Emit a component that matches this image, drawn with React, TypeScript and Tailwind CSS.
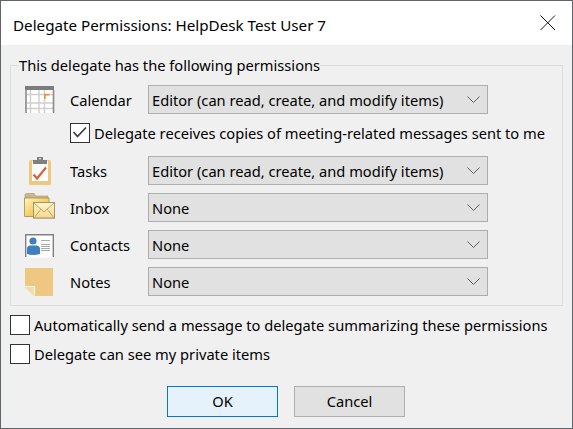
import React from "react";

const CalendarIcon = () => (
  <svg width="30" height="28" viewBox="0 0 30 28" className="block mt-[1px]">
    <rect x="0" y="0" width="29" height="27" fill="#fff" />
    <g stroke="#cfcfcf" strokeWidth="1.4" fill="none">
      <path d="M5.5 4V27M14 4V27M19.5 4V27" />
      <path d="M0 8.5H29M0 17H29M0 22.5H29" />
    </g>
    <path d="M1 4V27M28.5 4V27" stroke="#8a8a8a" strokeWidth="1.6" fill="none" />
    <rect x="0" y="0" width="29" height="4" fill="#7c7c7c" />
    <path d="M19.8 13V8.8H24.5" stroke="#ed8f2f" strokeWidth="1.6" fill="none" />
  </svg>
);

const TasksIcon = () => (
  <svg width="30" height="29" viewBox="0 0 30 29" className="block mt-[2px]">
    <rect x="4" y="3" width="22" height="25" rx="1.5" fill="#f0c77f" />
    <rect x="7" y="4" width="16" height="20" fill="#fff" />
    <rect x="8" y="3" width="14" height="4" fill="#7f7f7f" />
    <rect x="12" y="0" width="6" height="3" fill="#7f7f7f" />
    <rect x="14" y="1" width="2" height="1.5" fill="#d8d8d8" />
    <path d="M8.5 17.5L12 21.5L21 10.5" fill="none" stroke="#d95f3c" strokeWidth="2.2" />
  </svg>
);

const InboxIcon = () => (
  <svg width="32" height="29" viewBox="0 0 32 29" className="block -ml-[1px]">
    <defs>
      <linearGradient id="fold" x1="0" y1="0" x2="1" y2="1">
        <stop offset="0" stopColor="#fff6b8" />
        <stop offset="1" stopColor="#efaa22" />
      </linearGradient>
      <linearGradient id="env" x1="0" y1="0" x2="0" y2="1">
        <stop offset="0" stopColor="#fff6d2" />
        <stop offset="1" stopColor="#f6d88c" />
      </linearGradient>
    </defs>
    <path d="M1 8V2Q1 0.5 2.5 0.5H10L12 3H24V8Z" fill="#c9b98a" stroke="#a8986c" strokeWidth="0.6" />
    <path d="M0.5 23.5V5H25V23.5Z" fill="url(#fold)" stroke="#a08a58" strokeWidth="0.8" />
    <rect x="10" y="24" width="21" height="2" fill="#c8c8c8" />
    <rect x="9.5" y="9.5" width="21" height="15.5" fill="url(#env)" stroke="#a8946a" />
    <path d="M10 10L20 19L30 10M10 25L17 16M30 25L23 16" fill="none" stroke="#c9a45e" strokeWidth="1" />
  </svg>
);

const ContactsIcon = () => (
  <svg width="30" height="24" viewBox="0 0 30 24" className="block mt-[3px]">
    <rect x="0.5" y="0.5" width="28" height="23" fill="#fff" />
    <path d="M0.7 23V0.7H28.3V23" fill="none" stroke="#808080" strokeWidth="1.4" />
    <circle cx="8" cy="7" r="3.6" fill="#3f7fbf" />
    <path d="M2 20V15Q2 11.5 5 11.5H11Q15 11.5 15 15V20Q8 22 2 20Z" fill="#3f7fbf" />
    <path d="M16 6.5H25M16 10.5H25M16 12.5H25M16 14.5H25M16 16.5H25" stroke="#a9a9a9" strokeWidth="1" />
  </svg>
);

const NotesIcon = () => (
  <svg width="29" height="29" viewBox="0 0 29 29" className="block mt-[2px]">
    <path d="M0 0H28V28H9L0 19Z" fill="#eec882" />
    <path d="M0 19H9V28Z" fill="#f3dcae" />
    <path d="M0 18.5H9.5V28" fill="none" stroke="#fbf3e2" strokeWidth="1.2" />
  </svg>
);

const Chevron = () => (
  <svg width="13" height="7" viewBox="0 0 13 7" className="block">
    <path d="M0.5 0.5L6.5 6.5L12.5 0.5" fill="none" stroke="#606060" strokeWidth="1" />
  </svg>
);

const Select = ({ value }: { value: string }) => (
  <div className="w-[340px] h-[29px] flex items-center justify-between bg-[#e1e1e1] border border-[#adadad] pl-[3px] pr-[7px] box-border">
    <span>{value}</span>
    <Chevron />
  </div>
);

const Row = ({ icon, label, value, className }: { icon: React.ReactNode; label: string; value: string; className?: string }) => (
  <div className={"flex items-center h-[29px] " + (className ?? "")}>
    <div className="w-[45px] h-[29px] flex items-center">{icon}</div>
    <div className="w-[78px]">{label}</div>
    <Select value={value} />
  </div>
);

const Check = ({ checked }: { checked?: boolean }) => (
  <div className="w-[20px] h-[20px] shrink-0 bg-white border border-[#333333] box-border">
    {checked && (
      <svg width="18" height="18" viewBox="0 0 18 18" className="block">
        <path d="M2.5 8L6.5 12.5L15 3.5" fill="none" stroke="#404040" strokeWidth="1.8" />
      </svg>
    )}
  </div>
);

const editor = "Editor (can read, create, and modify items)";

export default function App() {
  return (
    <div className="w-[573px] h-[429px] bg-[#f0f0f0] border border-[#5f6468] box-border flex flex-col text-[14.66px] leading-[20px] text-black font-['Noto_Sans',sans-serif] overflow-hidden">
      <div className="h-[44px] shrink-0 bg-white flex items-center justify-between pl-[12px] pr-[16px]">
        <span className="text-[15.2px] pt-[3px]">Delegate Permissions: HelpDesk Test User 7</span>
        <svg width="16" height="16" viewBox="0 0 16 16" className="block">
          <path d="M0.5 0.5L15 15M15 0.5L0.5 15" stroke="#111" strokeWidth="1" fill="none" />
        </svg>
      </div>
      <fieldset className="mx-[9px] mt-[10px] h-[251px] border border-[#dcdcdc] pl-[14px] box-border">
        <legend className="-ml-[6px]">This delegate has the following permissions</legend>
        <Row icon={<CalendarIcon />} label="Calendar" value={editor} className="mt-[10px]" />
        <div className="flex items-center ml-[45px] mt-[9px] gap-[4px] h-[20px]">
          <Check checked />
          <span>Delegate receives copies of meeting-related messages sent to me</span>
        </div>
        <Row icon={<TasksIcon />} label="Tasks" value={editor} className="mt-[13px]" />
        <Row icon={<InboxIcon />} label="Inbox" value="None" className="mt-[8px]" />
        <Row icon={<ContactsIcon />} label="Contacts" value="None" className="mt-[8px]" />
        <Row icon={<NotesIcon />} label="Notes" value="None" className="mt-[8px]" />
      </fieldset>
      <div className="ml-[9px] mt-[9px] flex flex-col gap-[9px]">
        <div className="flex items-center gap-[4px] h-[20px]">
          <Check />
          <span>Automatically send a message to delegate summarizing these permissions</span>
        </div>
        <div className="flex items-center gap-[4px] h-[20px]">
          <Check />
          <span>Delegate can see my private items</span>
        </div>
      </div>
      <div className="mt-[22px] ml-[166px] flex gap-[16px]">
        <div className="w-[111px] h-[31px] pb-[1px] flex items-center justify-center bg-[#e5f1fb] border border-[#0078d7] box-border">OK</div>
        <div className="w-[111px] h-[31px] pb-[1px] flex items-center justify-center bg-[#e1e1e1] border border-[#adadad] box-border">Cancel</div>
      </div>
    </div>
  );
}
